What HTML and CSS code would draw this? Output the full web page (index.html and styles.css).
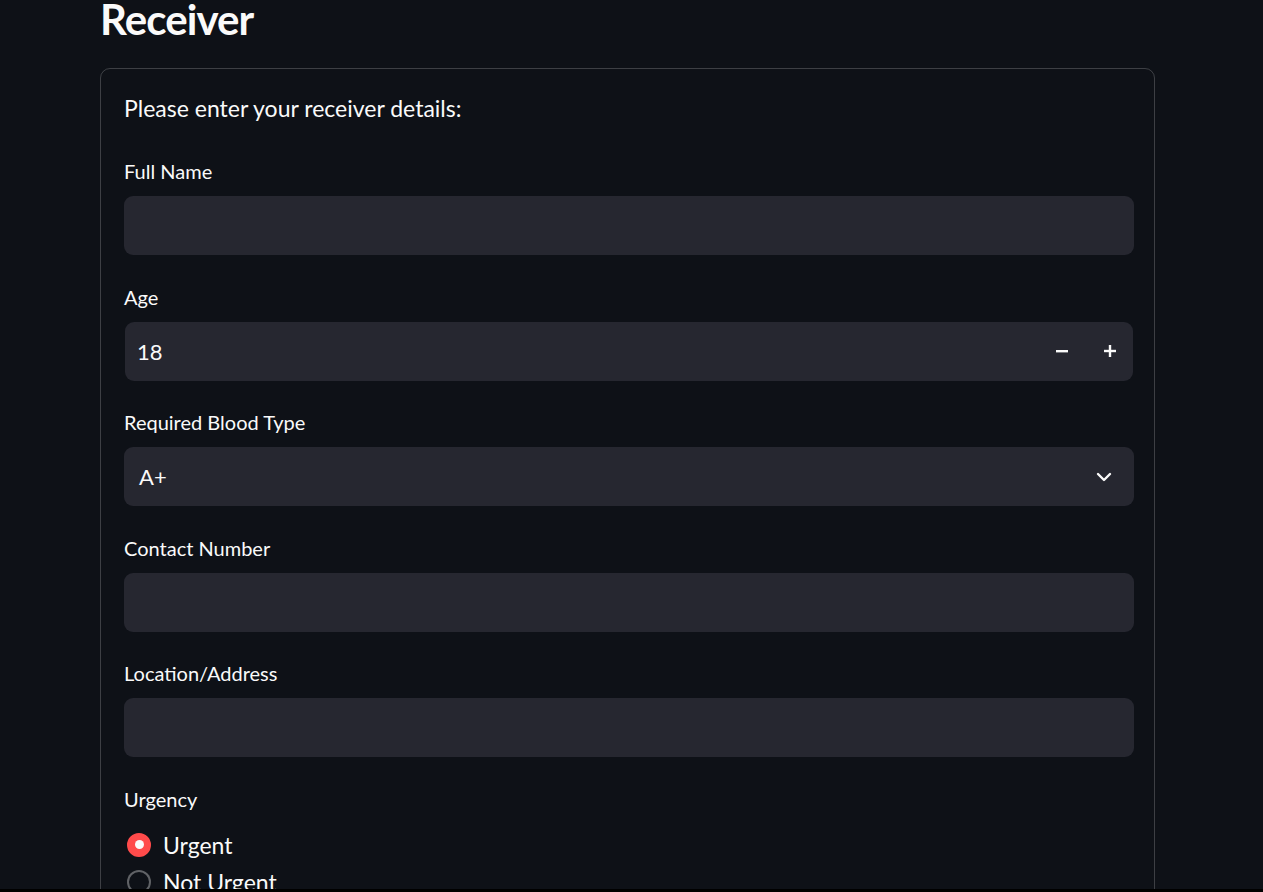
FILE: index.html
```html
<!DOCTYPE html>
<html lang="en">
<head>
<meta charset="utf-8">
<title>Receiver</title>
<link rel="stylesheet" href="styles.css">
</head>
<body>
<main class="main">
  <h1 class="title">Receiver</h1>
  <form class="card">
    <p class="intro">Please enter your receiver details:</p>

    <div class="field">
      <label class="label">Full Name</label>
      <div class="input"></div>
    </div>

    <div class="field">
      <label class="label">Age</label>
      <div class="input number">
        <span class="value">18</span>
        <span class="steppers">
          <svg class="step" width="14" height="14" viewBox="0 0 14 14"><rect x="1" y="6" width="12" height="2.4" fill="#fafafa"/></svg>
          <svg class="step" width="14" height="14" viewBox="0 0 14 14"><rect x="1" y="5.8" width="12" height="2.4" fill="#fafafa"/><rect x="5.8" y="1" width="2.4" height="12" fill="#fafafa"/></svg>
        </span>
      </div>
    </div>

    <div class="field">
      <label class="label">Required Blood Type</label>
      <div class="input select">
        <span class="value sel">A+</span>
        <svg class="chev" width="16" height="10" viewBox="0 0 16 10"><path d="M2 2l6 6 6-6" fill="none" stroke="#fafafa" stroke-width="2.4" stroke-linecap="round" stroke-linejoin="round"/></svg>
      </div>
    </div>

    <div class="field">
      <label class="label">Contact Number</label>
      <div class="input"></div>
    </div>

    <div class="field">
      <label class="label">Location/Address</label>
      <div class="input"></div>
    </div>

    <div class="field radios">
      <label class="label">Urgency</label>
      <div class="radio-list">
        <div class="radio checked"><span class="dot"></span><span class="rtext">Urgent</span></div>
        <div class="radio"><span class="dot"></span><span class="rtext">Not Urgent</span></div>
      </div>
    </div>
  </form>
</main>
<div class="bottom-edge"></div>
</body>
</html>
```

FILE: styles.css
```css
html, body {
  margin: 0;
  padding: 0;
  height: 100%;
  overflow: hidden;
}
body {
  background: #0e1117;
  color: #fafafa;
  font-family: "Lato", "Noto Sans", sans-serif;
}
.main {
  width: 1055px;
  margin-left: 100px;
}
.title {
  margin: -7px 0 0 0;
  font-size: 42px;
  line-height: 52px;
  font-weight: 700;
  letter-spacing: -0.9px;
}
.card {
  margin-top: 23px;
  border: 1px solid rgba(250, 250, 250, 0.2);
  border-radius: 10px;
  padding: 22px 20px 24px 23px;
  height: 900px;
}
.intro {
  margin: 0 0 31px 0;
  font-size: 23px;
  line-height: 34px;
}
.field {
  display: flex;
  flex-direction: column;
  margin-bottom: 26.5px;
}
.label {
  font-size: 20px;
  line-height: 30px;
  margin-bottom: 10px;
}
.input {
  height: 59px;
  background: #262730;
  border-radius: 9px;
  display: flex;
  align-items: center;
  box-sizing: border-box;
}
.number {
  margin: 0 1px;
  padding: 0 16px 0 12px;
}
.select {
  padding: 0 22px 0 15px;
}
.value {
  flex: 1;
  font-size: 22px;
}
.steppers {
  display: flex;
  gap: 34px;
  align-items: center;
}
.step {
  display: block;
}
.chev {
  display: block;
}
.radio-list {
  display: flex;
  flex-direction: column;
  gap: 13px;
  margin-top: 9px;
}
.radio {
  display: flex;
  align-items: center;
  gap: 12px;
  padding-left: 3px;
  font-size: 23px;
  line-height: 24px;
}
.dot {
  width: 24px;
  height: 24px;
  border-radius: 50%;
  box-sizing: border-box;
  border: 2px solid rgba(250, 250, 250, 0.35);
  background: #0e1117;
  display: flex;
  align-items: center;
  justify-content: center;
}
.checked .dot {
  background: #ff4b4b;
  border-color: #ff4b4b;
}
.checked .dot::after {
  content: "";
  width: 9px;
  height: 9px;
  border-radius: 50%;
  background: #fafafa;
}
.bottom-edge {
  position: fixed;
  left: 0;
  right: 0;
  bottom: 0;
  height: 3px;
  background: #000;
}
```
